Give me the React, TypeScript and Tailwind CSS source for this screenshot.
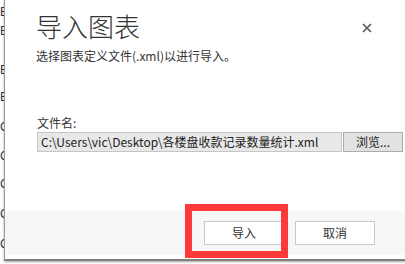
const bgLines: { ch: string; h: number }[] = [
  { ch: 'E', h: 19 },
  { ch: 'E', h: 39 },
  { ch: 'E', h: 27 },
  { ch: 'E', h: 30 },
  { ch: 'C', h: 29 },
  { ch: 'C', h: 28 },
  { ch: 'C', h: 30 },
  { ch: 'C', h: 30 },
  { ch: 'C', h: 20 },
];

const cjk = { fontFamily: '"Noto Sans CJK SC", "Noto Sans", sans-serif' };

export default function App() {
  return (
    <div className="relative flex h-[264px] w-[405px] overflow-hidden bg-white" style={cjk}>
      {/* app behind the dialog */}
      <div
        className="w-[4px] shrink-0 overflow-hidden pt-[6px] text-[12px] leading-none text-[#333]"
        style={{ fontFamily: '"Liberation Sans", sans-serif' }}
      >
        {bgLines.map((l, i) => (
          <div key={i} style={{ height: l.h }}>
            {l.ch}
          </div>
        ))}
      </div>

      {/* dialog */}
      <div className="flex h-[261px] w-[420px] shrink-0 flex-col border-b-2 border-l border-b-[#808080] border-l-[#9a9a9a] bg-white shadow-[0_1px_2px_rgba(0,0,0,0.35)]">
        <div className="flex-1 pl-[31px]">
          <div className="flex">
            <div className="w-[326px]">
              <h1 className="pt-[13px] text-[26px] font-light leading-[26px] text-[#333]">导入图表</h1>
              <p className="mt-[10px] text-[12px] leading-[14px] text-[#333]">选择图表定义文件(.xml)以进行导入。</p>
            </div>
            <svg width="10" height="10" viewBox="0 0 10 10" className="mt-[23px]">
              <path d="M1 1L9 9M9 1L1 9" stroke="#555" strokeWidth="1.6" />
            </svg>
          </div>

          <div className="mt-[53px] pl-[1px] text-[12px] leading-[14px] text-[#333]">文件名:</div>
          <div className="mt-[2px] flex pl-[1px]">
            <div className="flex h-[20px] w-[305px] items-center border border-[#c6c6c6] bg-[#e8e8e8] pl-[3px] text-[12px] text-[#222]">
              C:\Users\vic\Desktop\各楼盘收款记录数量统计.xml
            </div>
            <button className="ml-[1px] flex h-[20px] w-[60px] items-center justify-center border border-[#adadad] bg-[#e1e1e1] text-[12px] text-[#222]">
              浏览...
            </button>
          </div>
        </div>

        <div className="flex h-[44px] gap-[11px] bg-[#f7f7f7] pl-[199px] pt-[10px]">
          <button className="h-[24px] w-[80px] border border-[#c8c8c8] bg-white text-[12px] text-[#333]">导入</button>
          <button className="h-[24px] w-[80px] border border-[#c8c8c8] bg-white text-[12px] text-[#333]">取消</button>
        </div>
        <div className="h-[4px] bg-white" />
      </div>

      {/* red annotation box */}
      <div className="absolute left-[185px] top-[204px] h-[54px] w-[103px] border-[7px] border-[#fc3a3a]" />
    </div>
  );
}
